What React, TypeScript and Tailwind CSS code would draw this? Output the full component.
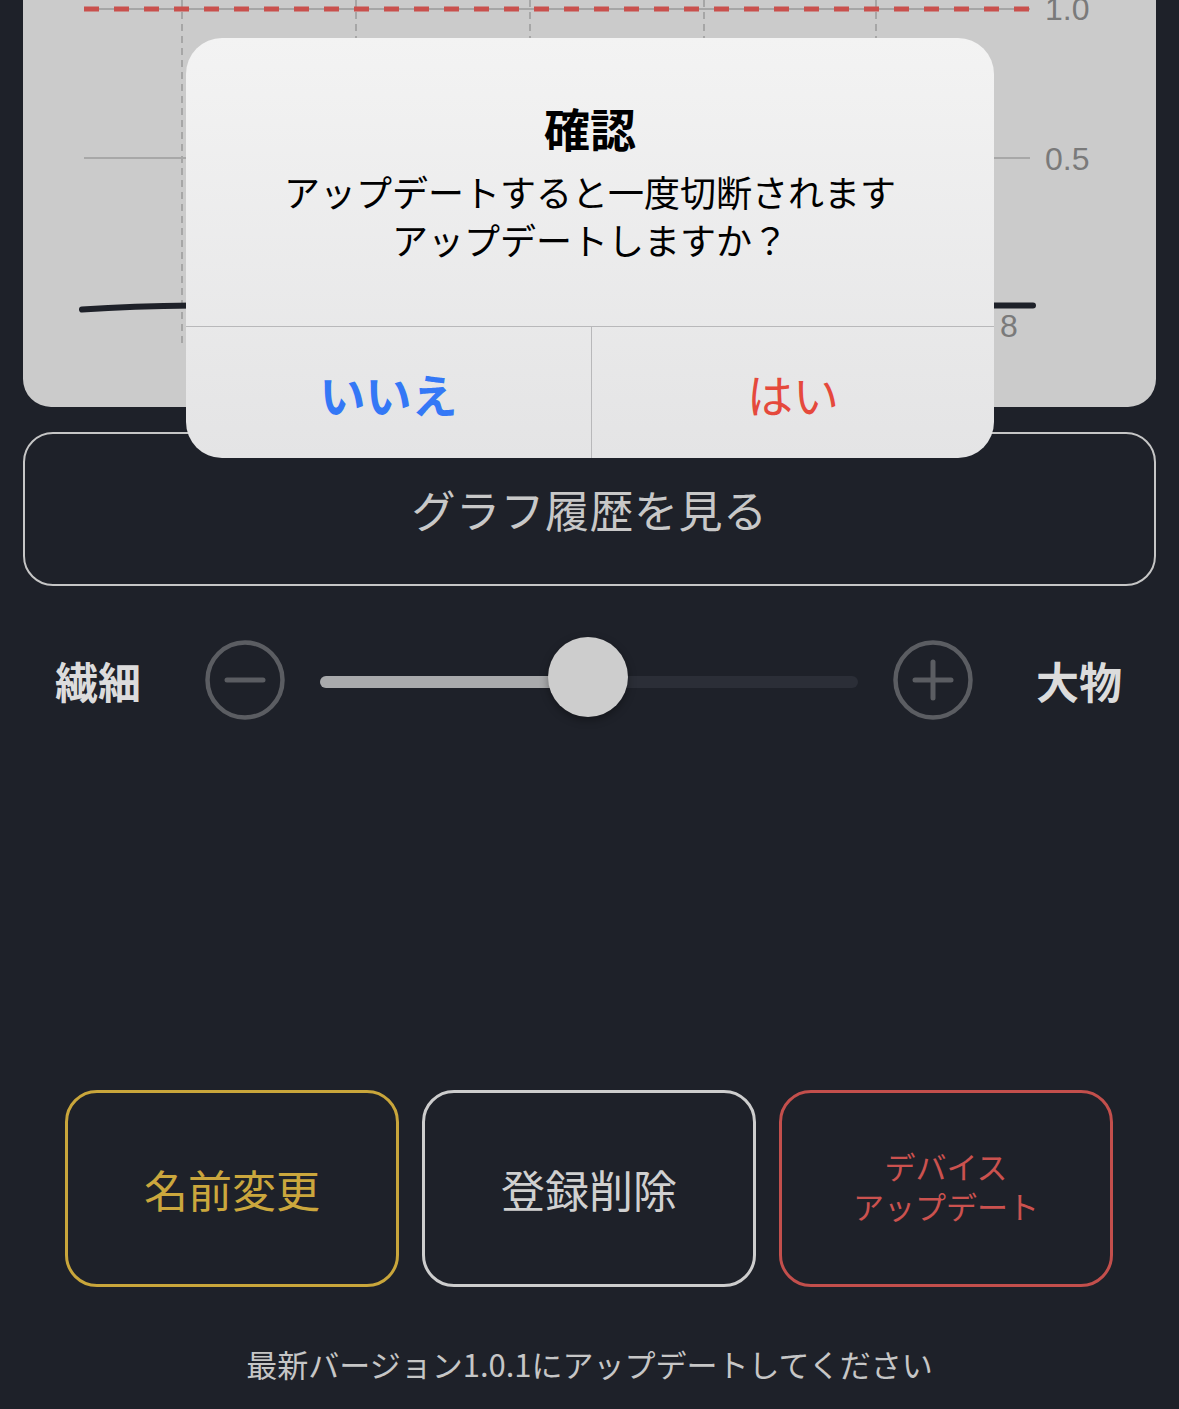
import React from "react";

const JP = { fontFamily: '"Noto Sans CJK JP", "Noto Sans", sans-serif' };

function Chart() {
  const vx = [159, 333, 507, 681, 853];
  return (
    <svg width="1132" height="407" viewBox="0 0 1132 407" className="block">
      {vx.map((x) => (
        <line key={x} x1={x} y1={0} x2={x} y2={345} stroke="#9a9a9a" strokeWidth={1.5} strokeDasharray="7 5" />
      ))}
      <line x1={61} y1={9} x2={1007} y2={9} stroke="#a6a6a6" strokeWidth={2} />
      <line x1={61} y1={9} x2={1007} y2={9} stroke="#c9504d" strokeWidth={5} strokeDasharray="15 15" />
      <line x1={61} y1={158} x2={1007} y2={158} stroke="#a8a8a8" strokeWidth={2} />
      <path d="M59 309.5 Q 110 306 170 305.5 L 1010 305.5" fill="none" stroke="#1e2129" strokeWidth={6} strokeLinecap="round" />
      <text x={1022} y={20} fontSize={32} fill="#7a7a7a" fontFamily="Liberation Sans, Arial, sans-serif">1.0</text>
      <text x={1022} y={170} fontSize={32} fill="#7a7a7a" fontFamily="Liberation Sans, Arial, sans-serif">0.5</text>
      <text x={977} y={337} fontSize={32} fill="#7a7a7a" fontFamily="Liberation Sans, Arial, sans-serif">8</text>
    </svg>
  );
}

function CircleIcon({ plus }: { plus?: boolean }) {
  return (
    <svg width="80" height="80" viewBox="0 0 80 80" className="block shrink-0">
      <circle cx="40" cy="40" r="37.5" fill="none" stroke="#5b5d62" strokeWidth="4.5" />
      <line x1="22" y1="40" x2="58" y2="40" stroke="#5b5d62" strokeWidth="5" strokeLinecap="round" />
      {plus && <line x1="40" y1="22" x2="40" y2="58" stroke="#5b5d62" strokeWidth="5" strokeLinecap="round" />}
    </svg>
  );
}

export default function App() {
  return (
    <div className="relative w-[1179px] h-[1409px] bg-[#1e2129] overflow-hidden" style={JP}>
      {/* chart card */}
      <div className="mx-[23px] h-[407px] bg-[#cbcbcb] rounded-b-[28px] overflow-hidden">
        <Chart />
      </div>

      {/* graph history button */}
      <div className="mx-[23px] mt-[25px] h-[154px] rounded-[30px] border-2 border-[#c6c6c6] flex items-center justify-center">
        <span className="text-[44px] leading-none text-[#c8c8c8] tracking-[0.5px]">グラフ履歴を見る</span>
      </div>

      {/* slider row */}
      <div className="mt-[54px] h-[80px] flex items-center pl-[55px]">
        <span className="w-[86px] text-[43px] leading-none font-bold text-[#dcdcdc]">繊細</span>
        <div className="ml-[64px]">
          <CircleIcon />
        </div>
        <div className="relative ml-[35px] w-[538px] h-[12px] rounded-full bg-[#2b2e37] mt-[4px]">
          <div className="absolute left-0 top-0 h-[12px] w-[268px] rounded-full bg-[#a9aaac]" />
          <div className="absolute left-[228px] top-[-39px] w-[80px] h-[80px] rounded-full bg-[#cdcdcd] shadow-[0_3px_8px_rgba(0,0,0,0.35)]" />
        </div>
        <div className="ml-[35px]">
          <CircleIcon plus />
        </div>
        <span className="ml-[63px] w-[90px] text-[43px] leading-none font-bold text-[#dcdcdc]">大物</span>
      </div>

      {/* action buttons */}
      <div className="mt-[370px] flex gap-[23px] px-[65px]">
        <div className="w-[334px] h-[197px] rounded-[32px] border-[3px] border-[#c9a63b] flex items-center justify-center">
          <span className="text-[44px] leading-none text-[#cba73d]">名前変更</span>
        </div>
        <div className="w-[334px] h-[197px] rounded-[32px] border-[3px] border-[#cdcdcd] flex items-center justify-center">
          <span className="text-[44px] leading-none text-[#d0d0d0]">登録削除</span>
        </div>
        <div className="w-[334px] h-[197px] rounded-[32px] border-[3px] border-[#c34f4c] flex items-center justify-center">
          <p className="text-center text-[31px] leading-[40px] text-[#cb524f] mb-[5px]">
            デバイス
            <br />
            アップデート
          </p>
        </div>
      </div>

      {/* footer */}
      <div className="mt-[57px] text-center text-[31px] leading-[40px] text-[#c6c6c6]">
        最新バージョン1.0.1にアップデートしてください
      </div>

      {/* alert dialog overlay */}
      <div className="absolute left-[186px] top-[38px] w-[808px] h-[420px] rounded-[36px] overflow-hidden bg-gradient-to-b from-[#f3f3f3] to-[#e4e4e5] flex flex-col">
        <div className="h-[288px] flex flex-col items-center pt-[63px]">
          <div className="text-[46px] leading-[52px] font-bold text-black">確認</div>
          <div className="mt-[14px] text-[36px] leading-[48px] text-black text-center">
            <div>アップデートすると一度切断されます</div>
            <div>アップデートしますか？</div>
          </div>
        </div>
        <div className="h-px bg-[#b8b8ba]" />
        <div className="flex-1 flex">
          <div className="w-[405px] flex items-center justify-center">
            <span className="text-[46px] leading-none font-bold text-[#3478f6]">いいえ</span>
          </div>
          <div className="w-px bg-[#b8b8ba]" />
          <div className="flex-1 flex items-center justify-center">
            <span className="text-[46px] leading-none text-[#e5493c]">はい</span>
          </div>
        </div>
      </div>
    </div>
  );
}
